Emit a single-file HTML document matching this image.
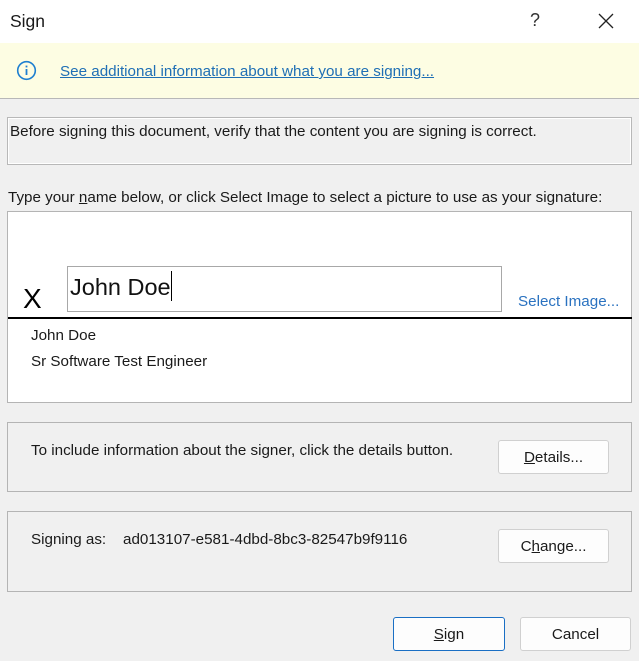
<!DOCTYPE html>
<html><head><meta charset="utf-8"><style>
*{margin:0;padding:0;box-sizing:border-box}
body{width:639px;height:661px;background:#f0f0f0;font-family:"Liberation Sans",sans-serif;font-size:15.2px;color:#1a1a1a;position:relative;overflow:hidden}
.a{position:absolute;white-space:nowrap}
.btn{position:absolute;background:#fdfdfd;border:1px solid #d0d0d0;border-radius:3px;text-align:center;font-size:15.2px}
</style></head><body>
<div class="a" style="left:0;top:0;width:639px;height:43px;background:#fff"></div>
<div class="a" style="left:10px;top:11px;font-size:17.5px">Sign</div>
<div class="a" style="left:530px;top:10px;font-size:18px;color:#333">?</div>
<svg class="a" style="left:598px;top:13px" width="16" height="16"><path d="M1 1L15 15M15 1L1 15" stroke="#222" stroke-width="1.3"/></svg>
<div class="a" style="left:0;top:43px;width:639px;height:56px;background:#fdfde3;border-bottom:1px solid #b8b8b8"></div>
<svg class="a" style="left:16px;top:60px" width="21" height="21"><circle cx="10.5" cy="10.5" r="8.8" fill="none" stroke="#1e7fd0" stroke-width="1.6"/><rect x="9.6" y="9" width="1.8" height="6" fill="#1e7fd0"/><rect x="9.6" y="5.6" width="1.8" height="1.8" fill="#1e7fd0"/></svg>
<div class="a" style="left:60px;top:63px;color:#1f6fb5;text-decoration:underline">See additional information about what you are signing...</div>
<div class="a" style="left:7px;top:117px;width:625px;height:48px;border:1px solid #b8b8b8;box-shadow:inset 0 0 0 1px #fff"></div>
<div class="a" style="left:10px;top:123px">Before signing this document, verify that the content you are signing is correct.</div>
<div class="a" style="left:8px;top:189px">Type your <u>n</u>ame below, or click Select Image to select a picture to use as your signature:</div>
<div class="a" style="left:7px;top:211px;width:625px;height:192px;background:#fff;border:1px solid #b4b4b4"></div>
<div class="a" style="left:67px;top:266px;width:435px;height:46px;border:1px solid #a8a8a8;background:#fff"></div>
<div class="a" style="left:70px;top:274px;font-size:23.5px;color:#111">John Doe</div>
<div class="a" style="left:171px;top:271px;width:1px;height:30px;background:#000"></div>
<div class="a" style="left:23px;top:283px;font-size:28px;color:#000">X</div>
<div class="a" style="left:518px;top:293px;color:#2a72c0">Select Image...</div>
<div class="a" style="left:8px;top:317px;width:624px;height:2px;background:#000"></div>
<div class="a" style="left:31px;top:327px">John Doe</div>
<div class="a" style="left:31px;top:353px">Sr Software Test Engineer</div>
<div class="a" style="left:7px;top:422px;width:625px;height:70px;border:1px solid #b4b4b4"></div>
<div class="a" style="left:31px;top:442px">To include information about the signer, click the details button.</div>
<div class="btn" style="left:498px;top:440px;width:111px;height:34px;line-height:33px"><u>D</u>etails...</div>
<div class="a" style="left:7px;top:511px;width:625px;height:81px;border:1px solid #b4b4b4"></div>
<div class="a" style="left:31px;top:531px">Signing as:&nbsp;&nbsp;&nbsp; ad013107-e581-4dbd-8bc3-82547b9f9116</div>
<div class="btn" style="left:498px;top:529px;width:111px;height:34px;line-height:33px">C<u>h</u>ange...</div>
<div class="btn" style="left:393px;top:617px;width:112px;height:34px;line-height:33px;border-color:#1a6fc4"><u>S</u>ign</div>
<div class="btn" style="left:520px;top:617px;width:111px;height:34px;line-height:33px">Cancel</div>
</body></html>
